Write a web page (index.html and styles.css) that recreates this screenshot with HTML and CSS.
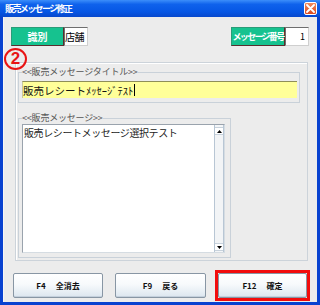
FILE: index.html
```html
<!DOCTYPE html>
<html lang="ja">
<head>
<meta charset="utf-8">
<link rel="stylesheet" href="styles.css">
</head>
<body>
<div class="window">
  <div class="titlebar">
    <span class="title">販売メッセージ修正</span>
    <span class="close"><svg width="9" height="9" viewBox="0 0 9 9"><path d="M1 1 L8 8 M8 1 L1 8" stroke="#fff" stroke-width="1.8" stroke-linecap="round"/></svg></span>
  </div>
  <div class="body">
    <div class="toprow">
      <div class="pair">
        <div class="tag tag-id">識別</div>
        <div class="val val-store">店舗</div>
      </div>
      <div class="pair">
        <div class="tag tag-no">メッセージ番号</div>
        <div class="val val-num">1</div>
      </div>
    </div>
    <div class="group">
      <fieldset class="fs fs-title">
        <legend>&lt;&lt;販売メッセージタイトル&gt;&gt;</legend>
        <div class="input">販売レシートﾒｯｾｰｼﾞﾃｽﾄ<span class="caret"></span></div>
      </fieldset>
      <fieldset class="fs fs-msg">
        <legend>&lt;&lt;販売メッセージ&gt;&gt;</legend>
        <div class="textarea">
          <div class="ta-text">販売レシートメッセージ選択テスト</div>
          <div class="scroll">
            <div class="arrow"><svg width="5" height="3" viewBox="0 0 5 3"><path d="M0 3 L2.5 0 L5 3 Z" fill="#000"/></svg></div>
            <div class="track"></div>
            <div class="arrow"><svg width="5" height="3" viewBox="0 0 5 3"><path d="M0 0 L5 0 L2.5 3 Z" fill="#000"/></svg></div>
          </div>
        </div>
      </fieldset>
    </div>
    <div class="buttons">
      <button class="btn btn-f4">F4<span class="sp"></span>全消去</button>
      <button class="btn btn-f9">F9<span class="sp"></span>戻る</button>
      <div class="highlight"><button class="btn btn-f12">F12<span class="sp"></span>確定</button></div>
    </div>
  </div>
  <div class="marker">2</div>
</div>
</body>
</html>
```
FILE: styles.css
```css
* { box-sizing: border-box; }
body { margin: 0; font-family: "Noto Sans CJK JP", "Noto Sans", sans-serif; }
.window {
  width: 320px; height: 305px; position: relative;
  display: flex; flex-direction: column;
  background: #0842D0;
}
.titlebar {
  height: 17px; display: flex; align-items: center; justify-content: space-between;
  padding: 0 3px 0 5px;
  background: linear-gradient(#3C8EFA 0%, #0F62EC 25%, #0656E4 70%, #0748CC 100%);
}
.title { color: #fff; font-size: 9px; font-weight: bold; letter-spacing: -1.6px; line-height: 12px; }
.close {
  width: 13px; height: 13px; border: 1px solid #fff; border-radius: 2px;
  background: linear-gradient(#F08A5E, #DA4A20);
  display: flex; align-items: center; justify-content: center;
}
.body {
  flex: 1; margin: 0 3px 3px 3px; background: #ECECEC; padding-top: 10px;
  border-left: 1px solid #F6F6F6;
}
.toprow { display: flex; justify-content: space-between; padding: 0 8px 0 7px; height: 19px; }
.pair { display: flex; }
.tag {
  background: #16C28F; color: #fff; font-weight: bold;
  display: flex; align-items: center; justify-content: center;
  border: 1px solid #2A9C78; border-bottom-color: #5A2E2E; border-right-color: #5A2E2E;
}
.tag-id { width: 53px; font-size: 10px; }
.tag-no { width: 54px; font-size: 9px; letter-spacing: -1.7px; }
.val {
  width: 24px; background: #fff; font-size: 10px; color: #000;
  border: 1px solid #6E6E6E; border-right-color: #CFCFCF; border-bottom-color: #CFCFCF;
  display: flex; align-items: center;
}
.val-store { padding-left: 0; letter-spacing: -0.5px; }
.val-num { justify-content: flex-end; padding-right: 3px; font-size: 9px; }
.group {
  margin: 16px 9px 0 11px; height: 199px;
  border: 1px solid #CCD3DA; box-shadow: inset 1px 1px 0 #fff;
  padding: 4px 0 0 2px;
}
.fs { margin: 0; border: 1px solid #C9D1D9; min-width: 0; }
legend { padding: 0; font-size: 9px; line-height: 10px; color: #555; letter-spacing: -0.2px; }
.fs-title { width: 282px; padding: 4px 2px 4px 3px; }
.input {
  height: 17px; background: #FFFF99; color: #111;
  border-top: 1px solid #8E8E58; border-left: 1px solid #C9C9A0;
  font-size: 10.5px; line-height: 15px; display: flex; align-items: center; padding-left: 0;
}
.caret { width: 1px; height: 12px; background: #000; margin-left: 1px; }
.fs-msg { width: 213px; margin-top: 10px; padding: 1px 4px 4px 3px; }
.textarea {
  width: 203px; height: 129px; display: flex; background: #fff;
  border: 1px solid #9AA3AD; border-right-color: #D5DCE2; border-bottom-color: #D5DCE2;
}
.ta-text { flex: 1; font-size: 10px; line-height: 12px; padding: 2px 0 0 1px; color: #222; letter-spacing: -0.4px; }
.scroll {
  width: 10px; display: flex; flex-direction: column; padding: 2px 0 1px;
  border-left: 1px solid #B8C6D4; border-right: 1px solid #B8C6D4; background: #F4F6F8;
}
.arrow { height: 8px; background: #fff; display: flex; align-items: center; justify-content: center; border-bottom: 1px solid #C8D2DC; border-top: 1px solid #C8D2DC; }
.track { flex: 1; background: #F2F4F6; }
.buttons { display: flex; align-items: flex-start; margin-top: 9px; padding-left: 9px; }
.btn {
  height: 25px; margin: 3px 0 0; padding: 0;
  border: 1px solid #8896A4; border-radius: 2px;
  background: linear-gradient(#FFFFFF 0%, #F7FAFC 45%, #DCE6EF 100%);
  font-family: "Noto Sans CJK JP", sans-serif; font-size: 8px; font-weight: bold; color: #111;
  display: flex; align-items: center; justify-content: center;
  box-shadow: inset 0 -1px 0 #C4D0DC;
}
.sp { display: inline-block; width: 10px; }
.btn-f4 { width: 90px; }
.btn-f9 { width: 91px; margin-left: 12px; }
.highlight { margin-left: 9px; width: 95px; height: 31px; border: 3px solid #F20C0C; }
.btn-f12 { width: 89px; height: 25px; margin: 0; }
.marker {
  position: absolute; left: 4px; top: 48px; width: 23px; height: 22px;
  border: 2px solid #E81414; border-radius: 50%; color: #E81414;
  font-size: 17px; font-weight: bold; line-height: 18px; text-align: center;
  font-family: "Liberation Sans", sans-serif;
}
```
